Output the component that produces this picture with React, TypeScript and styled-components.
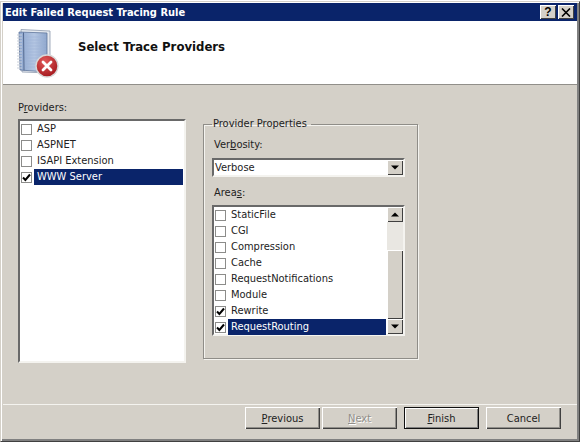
import React from 'react';
import styled, { createGlobalStyle } from 'styled-components';

const GlobalStyle = createGlobalStyle`
    html, body {
        margin: 0;
        padding: 0;
        background: #ffffff;
    }
    * {
        box-sizing: border-box;
    }
`;

const Dialog = styled.div`
    width: 580px;
    height: 441px;
    margin-top: 1px;
    display: flex;
    flex-direction: column;
    background: #d4d0c8;
    padding: 1px 2px 0 2px;
    border-left: 1px solid #d4d0c8;
    border-right: 1px solid #404040;
    border-bottom: 1px solid #404040;
    border-top: 1px solid #d4d0c8;
    box-shadow: inset 1px 1px 0 #ffffff, inset -2px -2px 0 #808080;
    font-family: 'DejaVu Sans', 'Liberation Sans', sans-serif;
    font-stretch: condensed;
    font-size: 11px;
    color: #111111;
`;

const TitleBar = styled.div`
    height: 18px;
    flex: none;
    display: flex;
    align-items: center;
    justify-content: space-between;
    padding: 0 3px 0 2px;
    background: #0a246a;
    color: #ffffff;
    font-weight: 700;
    font-size: 11px;
`;

const TitleButtons = styled.div`
    display: flex;
    gap: 2px;
`;

const TitleButton = styled.div`
    width: 16px;
    height: 14px;
    background: #d4d0c8;
    color: #000000;
    display: flex;
    align-items: center;
    justify-content: center;
    box-shadow: inset 1px 1px 0 #ffffff, inset -1px -1px 0 #404040;
    font-family: 'Liberation Sans', sans-serif;
    font-weight: 700;
    font-size: 12px;
`;

const Banner = styled.div`
    height: 64px;
    flex: none;
    display: flex;
    align-items: flex-start;
    background: #ffffff;
    border-bottom: 1px solid #918f8a;
    padding: 8px 0 0 14px;
`;

const BannerTitle = styled.div`
    margin: 10px 0 0 17px;
    font-weight: 700;
    font-size: 13px;
    color: #111111;
`;

const Content = styled.div`
    flex: 1;
    display: flex;
    align-items: flex-start;
    gap: 17px;
    padding: 16px 0 0 15px;
    border-bottom: 1px solid #f4f3ef;
`;

const ProviderColumn = styled.div`
    width: 168px;
    display: flex;
    flex-direction: column;
    gap: 4px;
`;

const FieldLabel = styled.div`
    line-height: 14px;
    height: 14px;
    color: #222222;
`;

const Sunken = styled.div<{ $h: number }>`
    height: ${(p) => p.$h}px;
    background: #ffffff;
    border: 2px solid;
    border-color: #696969 #f4f3ef #f4f3ef #696969;
    display: flex;
    min-width: 0;
`;

const ItemList = styled.div`
    flex: 1;
    min-width: 0;
    display: flex;
    flex-direction: column;
    padding: 0 1px;
`;

const Row = styled.div`
    height: 16px;
    flex: none;
    display: flex;
    align-items: center;
    gap: 2px;
`;

const Box = styled.div`
    width: 11px;
    height: 11px;
    flex: none;
    border: 1px solid #8c8c8a;
    background: #ffffff;
    display: flex;
    align-items: center;
    justify-content: center;
`;

const RowLabel = styled.div<{ $selected?: boolean }>`
    flex: 1;
    height: 16px;
    line-height: 15px;
    padding-left: 3px;
    white-space: nowrap;
    background: ${(p) => (p.$selected ? '#0a246a' : 'transparent')};
    color: ${(p) => (p.$selected ? '#ffffff' : '#222222')};
`;

const GroupBox = styled.fieldset`
    width: 215px;
    height: 242px;
    margin: 16px 0 0 0;
    padding: 0 12px 0 8px;
    border: 1px solid #8f8d88;
    box-shadow: 1px 1px 0 #f4f3ef, inset 1px 1px 0 #f4f3ef;
    display: flex;
    flex-direction: column;
`;

const GroupLegend = styled.legend`
    padding: 0 4px 0 1px;
    margin-left: 0;
    line-height: 14px;
    color: #222222;
`;

const GroupLabel = styled(FieldLabel)<{ $top: number; $bottom: number }>`
    margin: ${(p) => p.$top}px 0 ${(p) => p.$bottom}px 2px;
`;

const ComboText = styled.div`
    flex: 1;
    line-height: 15px;
    padding-left: 1px;
    color: #222222;
`;

const ArrowButton = styled.div`
    width: 16px;
    height: 15px;
    flex: none;
    background: #d4d0c8;
    box-shadow: inset 1px 1px 0 #ffffff, inset -1px -1px 0 #404040;
    display: flex;
    align-items: center;
    justify-content: center;
`;

const ScrollBar = styled.div`
    width: 16px;
    flex: none;
    display: flex;
    flex-direction: column;
    background: #e9e7e2;
`;

const ScrollGap = styled.div`
    height: 28px;
    flex: none;
`;

const ScrollThumb = styled.div`
    flex: 1;
    background: #d4d0c8;
    box-shadow: inset 1px 1px 0 #ffffff, inset -1px -1px 0 #404040;
`;

const Footer = styled.div`
    height: 36px;
    flex: none;
    display: flex;
    align-items: flex-start;
    padding: 2px 0 0 242px;
`;

const WizardButton = styled.div<{ $gap?: number; $disabled?: boolean; $default?: boolean }>`
    width: 75px;
    height: 22px;
    margin-left: ${(p) => p.$gap ?? 0}px;
    display: flex;
    align-items: center;
    justify-content: center;
    background: #d4d0c8;
    color: ${(p) => (p.$disabled ? '#918f8a' : '#222222')};
    text-shadow: ${(p) => (p.$disabled ? '1px 1px 0 #ffffff' : 'none')};
    box-shadow: ${(p) =>
        p.$default
            ? 'inset 0 0 0 1px #111111, inset 1px 1px 0 1px #ffffff, inset -1px -1px 0 1px #808080'
            : 'inset 1px 1px 0 #ffffff, inset -1px -1px 0 #404040, inset -2px -2px 0 #918f8a'};
`;

const Check = () => (
    <svg width="9" height="9" viewBox="0 0 9 9">
        <path d="M1 4.5 L3.4 7 L8 1.5" fill="none" stroke="#000000" strokeWidth="2" />
    </svg>
);

const Arrow = ({ up }: { up?: boolean }) => (
    <svg width="8" height="5" viewBox="0 0 8 5">
        <path d={up ? 'M4 0.5 L8 4.5 L0 4.5 Z' : 'M0 0.5 L8 0.5 L4 4.5 Z'} fill="#000000" />
    </svg>
);

const CloseGlyph = () => (
    <svg width="10" height="9" viewBox="0 0 10 9">
        <path d="M1 0.5 L9 8.5 M9 0.5 L1 8.5" stroke="#000000" strokeWidth="1.6" />
    </svg>
);

const NotebookIcon = () => (
    <svg width="44" height="49" viewBox="0 0 44 49">
        <defs>
            <linearGradient id="cover" x1="0" y1="0" x2="1" y2="0">
                <stop offset="0" stopColor="#8da6cf" />
                <stop offset="0.55" stopColor="#b4c6e2" />
                <stop offset="1" stopColor="#8ea6cc" />
            </linearGradient>
            <radialGradient id="stop" cx="0.4" cy="0.3" r="0.8">
                <stop offset="0" stopColor="#e25a5a" />
                <stop offset="1" stopColor="#9c1016" />
            </radialGradient>
        </defs>
        {/* back pages */}
        <path d="M4 0.5 L33 2 L33 44 L5 43 Z" fill="#e6eaf0" stroke="#8d99ad" strokeWidth="0.8" />
        {/* front cover */}
        <path d="M2 3 L30 4 L30 43 L3 41 Z" fill="url(#cover)" stroke="#60769c" strokeWidth="0.8" />
        <path d="M6.5 3.5 L7 41.5" stroke="#54698f" strokeWidth="1" />
        <path
            d="M9 8h20M9 11h20M9 14h20M9 17h20M9 20h20M9 23h20M9 26h20M9 29h20M9 32h20M9 35h20M9 38h20"
            stroke="#9fb4d6"
            strokeWidth="0.6"
        />
        {/* spiral */}
        <path
            d="M0 6h5M0 9h5M0 12h5M0 15h5M0 18h5M0 21h5M0 24h5M0 27h5M0 30h5M0 33h5M0 36h5M0 39h5"
            stroke="#c9cfd9"
            strokeWidth="1.2"
        />
        <circle cx="30" cy="37" r="11" fill="url(#stop)" stroke="#d8d8d8" strokeWidth="1.4" />
        <path
            d="M26 33 L34 41 M34 33 L26 41"
            stroke="#ffffff"
            strokeWidth="2.8"
            strokeLinecap="round"
        />
    </svg>
);

const providers = [
    { name: 'ASP' },
    { name: 'ASPNET' },
    { name: 'ISAPI Extension' },
    { name: 'WWW Server', checked: true, selected: true },
];

const areas = [
    { name: 'StaticFile' },
    { name: 'CGI' },
    { name: 'Compression' },
    { name: 'Cache' },
    { name: 'RequestNotifications' },
    { name: 'Module' },
    { name: 'Rewrite', checked: true },
    { name: 'RequestRouting', checked: true, selected: true },
];

type Item = { name: string; checked?: boolean; selected?: boolean };

const CheckRows = ({ items }: { items: Item[] }) => (
    <ItemList>
        {items.map((item) => (
            <Row key={item.name}>
                <Box>{item.checked && <Check />}</Box>
                <RowLabel $selected={item.selected}>{item.name}</RowLabel>
            </Row>
        ))}
    </ItemList>
);

export default function App() {
    return (
        <>
            <GlobalStyle />
            <Dialog>
                <TitleBar>
                    Edit Failed Request Tracing Rule
                    <TitleButtons>
                        <TitleButton>?</TitleButton>
                        <TitleButton>
                            <CloseGlyph />
                        </TitleButton>
                    </TitleButtons>
                </TitleBar>
                <Banner>
                    <NotebookIcon />
                    <BannerTitle>Select Trace Providers</BannerTitle>
                </Banner>
                <Content>
                    <ProviderColumn>
                        <FieldLabel>
                            P<u>r</u>oviders:
                        </FieldLabel>
                        <Sunken $h={244}>
                            <CheckRows items={providers} />
                        </Sunken>
                    </ProviderColumn>
                    <GroupBox>
                        <GroupLegend>Provider Properties</GroupLegend>
                        <GroupLabel $top={7} $bottom={6}>
                            Ver<u>b</u>osity:
                        </GroupLabel>
                        <Sunken $h={19}>
                            <ComboText>Verbose</ComboText>
                            <ArrowButton>
                                <Arrow />
                            </ArrowButton>
                        </Sunken>
                        <GroupLabel $top={9} $bottom={5}>
                            Area<u>s</u>:
                        </GroupLabel>
                        <Sunken $h={131}>
                            <CheckRows items={areas} />
                            <ScrollBar>
                                <ArrowButton>
                                    <Arrow up />
                                </ArrowButton>
                                <ScrollGap />
                                <ScrollThumb />
                                <ArrowButton>
                                    <Arrow />
                                </ArrowButton>
                            </ScrollBar>
                        </Sunken>
                    </GroupBox>
                </Content>
                <Footer>
                    <WizardButton>
                        <span>
                            <u>P</u>revious
                        </span>
                    </WizardButton>
                    <WizardButton $gap={2} $disabled>
                        <span>
                            <u>N</u>ext
                        </span>
                    </WizardButton>
                    <WizardButton $gap={7} $default>
                        <span>
                            <u>F</u>inish
                        </span>
                    </WizardButton>
                    <WizardButton $gap={7}>Cancel</WizardButton>
                </Footer>
            </Dialog>
        </>
    );
}
